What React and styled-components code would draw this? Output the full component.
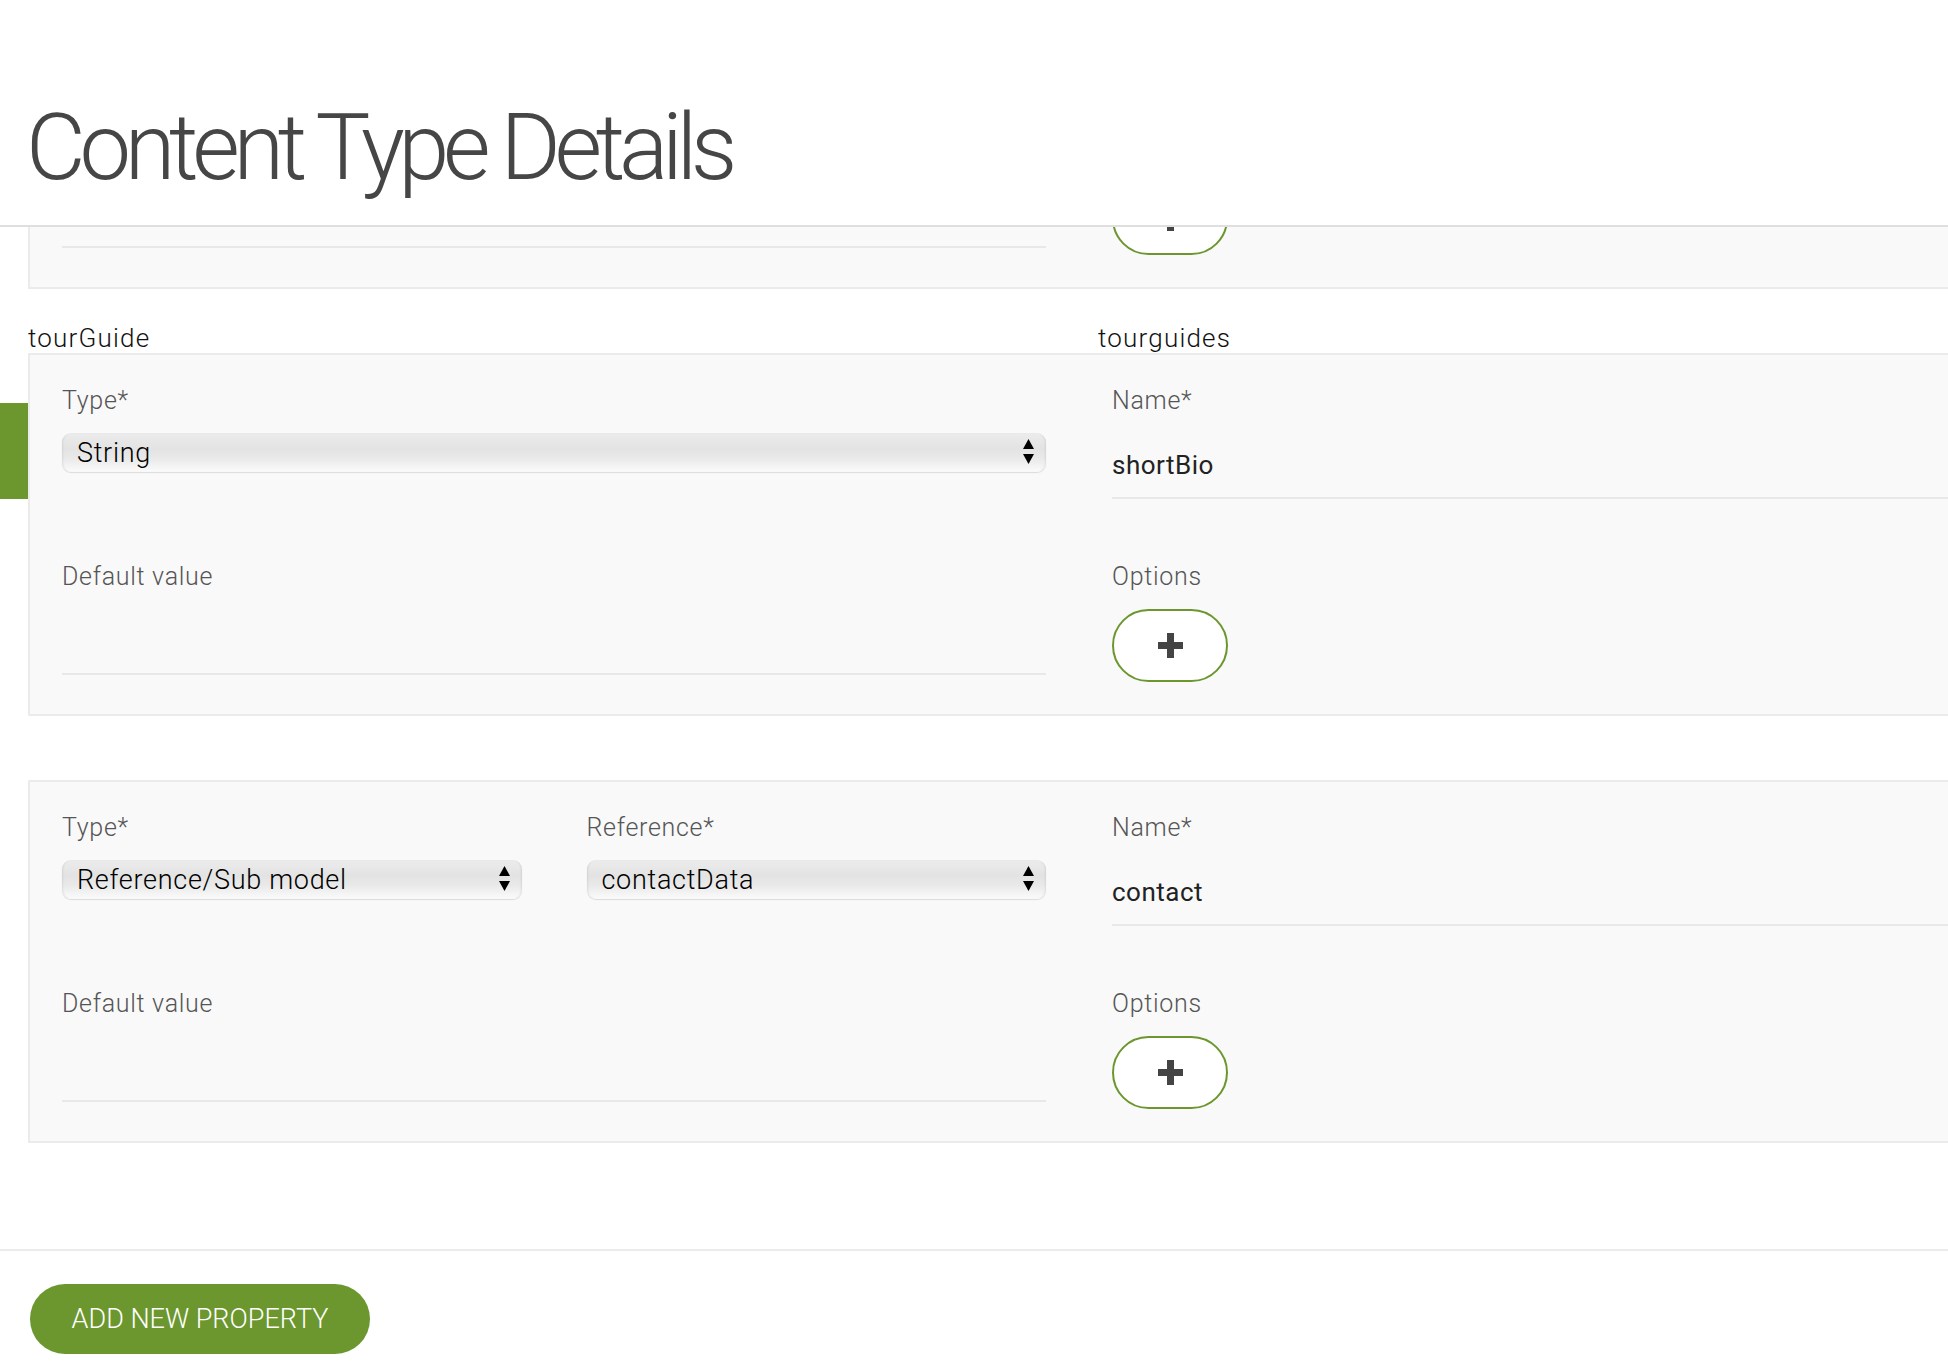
import React, { useLayoutEffect, useRef } from "react";
import styled, { createGlobalStyle } from "styled-components";

const FONT = `"Helvetica Neue", Roboto, "Liberation Sans", Arial, sans-serif`;
const GREEN = "#6b972e";

const GlobalStyle = createGlobalStyle`
  html, body {
    margin: 0;
    padding: 0;
    background: #fff;
  }
  body {
    font-family: ${FONT};
    overflow: hidden;
  }
  * {
    box-sizing: border-box;
  }
`;

const Page = styled.div`
  width: 1948px;
  height: 1368px;
  display: flex;
  flex-direction: column;
  overflow: hidden;
`;

const Header = styled.header`
  flex: none;
  height: 227px;
  padding: 102px 0 0 26px;
  border-bottom: 2px solid #dfdfdf;
`;

const Title = styled.h1`
  margin: 0;
  font-size: 92px;
  line-height: 92px;
  font-weight: 300;
  letter-spacing: -6.3px;
  color: #464646;
`;

const Scroller = styled.div`
  flex: 1;
  overflow: hidden;
`;

const List = styled.div`
  padding-bottom: 106px;
`;

const Item = styled.div`
  display: grid;
  grid-template-columns: 28px 2102px;
  grid-template-rows: 64px auto;
`;

const Handle = styled.div`
  grid-column: 1;
  grid-row: 2;
  margin-top: 50px;
  height: 96px;
  background: ${(p) => (p.$active ? GREEN : "transparent")};
`;

const Captions = styled.div`
  grid-column: 2;
  grid-row: 1;
  display: grid;
  grid-template-columns: 1070px 1fr;
  align-items: end;
  font-size: 26px;
  line-height: 30px;
  letter-spacing: 1.2px;
  font-weight: 300;
  color: #111;
`;

const Card = styled.div`
  grid-column: 2;
  grid-row: 2;
  display: grid;
  grid-template-columns: 984px 984px;
  align-items: start;
  column-gap: 66px;
  row-gap: 63px;
  padding: 31px 32px 32px;
  background: #f9f9f9;
  border: 2px solid #ebebeb;
`;

const Pair = styled.div`
  display: grid;
  grid-template-columns: 1fr 1fr;
  column-gap: 65px;
`;

const Field = styled.div`
  display: flex;
  flex-direction: column;
  min-width: 0;
`;

const Label = styled.label`
  font-size: 25px;
  line-height: 30px;
  font-weight: 300;
  letter-spacing: 0.7px;
  color: #555;
  margin-bottom: 17px;
`;

const SelectWrap = styled.div`
  position: relative;
  height: 39px;
`;

const Select = styled.select`
  appearance: none;
  width: 100%;
  height: 39px;
  padding: 0 40px 0 15px;
  border: none;
  border-radius: 9px;
  font-family: ${FONT};
  font-size: 27px;
  font-weight: 300;
  letter-spacing: 0.7px;
  color: #000;
  background: linear-gradient(
    to bottom,
    #ececec 0%,
    #e3e3e3 40%,
    #e9e9e9 65%,
    #f6f6f6 90%,
    #fbfbfb 100%
  );
  box-shadow: inset 2px 0 2px -1px rgba(0, 0, 0, 0.08),
    inset -2px 0 2px -1px rgba(0, 0, 0, 0.08), 0 1px 1px rgba(0, 0, 0, 0.12);
  outline: none;
`;

const Arrows = styled.svg`
  position: absolute;
  right: 12px;
  top: 6px;
  pointer-events: none;
`;

const TextInput = styled.input`
  height: 66px;
  width: 100%;
  padding: 0;
  border: none;
  border-bottom: 2px solid #e8e8e8;
  background: transparent;
  font-family: ${FONT};
  font-size: 26px;
  letter-spacing: 0.5px;
  color: #222;
  outline: none;
`;

const PlusButton = styled.button`
  width: 116px;
  height: 73px;
  padding: 0;
  border: 2px solid ${GREEN};
  border-radius: 37px;
  background: #fff;
  display: flex;
  align-items: center;
  justify-content: center;
  cursor: pointer;
`;

const Footer = styled.footer`
  flex: none;
  height: 119px;
  padding: 33px 0 0 30px;
  border-top: 2px solid #ebebeb;
`;

const AddButton = styled.button`
  width: 340px;
  height: 70px;
  border: none;
  border-radius: 35px;
  background: ${GREEN};
  color: #fff;
  font-family: ${FONT};
  font-size: 27px;
  font-weight: 300;
  text-transform: uppercase;
  cursor: pointer;
`;

function TypeSelect({ value }) {
  return (
    <SelectWrap>
      <Select defaultValue={value}>
        <option>{value}</option>
      </Select>
      <Arrows width="11" height="26" viewBox="0 0 11 26">
        <path d="M5.5 0 L11 10 L0 10 Z" fill="#000" />
        <path d="M0 15 L11 15 L5.5 25 Z" fill="#000" />
      </Arrows>
    </SelectWrap>
  );
}

function Plus() {
  return (
    <svg width="25" height="25" viewBox="0 0 25 25">
      <rect x="9" y="0" width="7" height="25" fill="#444" />
      <rect x="0" y="9" width="25" height="7" fill="#444" />
    </svg>
  );
}

const properties = [
  { model: "tour", collection: "tours", type: "String", name: "title" },
  { model: "tourGuide", collection: "tourguides", type: "String", name: "shortBio", active: true },
  { model: "", collection: "", type: "Reference/Sub model", reference: "contactData", name: "contact" },
];

function PropertyItem({ prop }) {
  return (
    <Item>
      <Captions>
        <span>{prop.model}</span>
        <span>{prop.collection}</span>
      </Captions>
      <Handle $active={prop.active} />
      <Card>
        {prop.reference ? (
          <Pair>
            <Field>
              <Label>Type*</Label>
              <TypeSelect value={prop.type} />
            </Field>
            <Field>
              <Label>Reference*</Label>
              <TypeSelect value={prop.reference} />
            </Field>
          </Pair>
        ) : (
          <Field>
            <Label>Type*</Label>
            <TypeSelect value={prop.type} />
          </Field>
        )}
        <Field>
          <Label>Name*</Label>
          <TextInput defaultValue={prop.name} />
        </Field>
        <Field>
          <Label>Default value</Label>
          <TextInput defaultValue="" />
        </Field>
        <Field>
          <Label>Options</Label>
          <PlusButton>
            <Plus />
          </PlusButton>
        </Field>
      </Card>
    </Item>
  );
}

export default function App() {
  const scrollRef = useRef(null);

  useLayoutEffect(() => {
    // the list is shown scrolled part way down
    if (scrollRef.current) scrollRef.current.scrollTop = 367;
  }, []);

  return (
    <Page>
      <GlobalStyle />
      <Header>
        <Title>Content Type Details</Title>
      </Header>
      <Scroller ref={scrollRef}>
        <List>
          {properties.map((p, i) => (
            <PropertyItem key={i} prop={p} />
          ))}
        </List>
      </Scroller>
      <Footer>
        <AddButton>Add new property</AddButton>
      </Footer>
    </Page>
  );
}
